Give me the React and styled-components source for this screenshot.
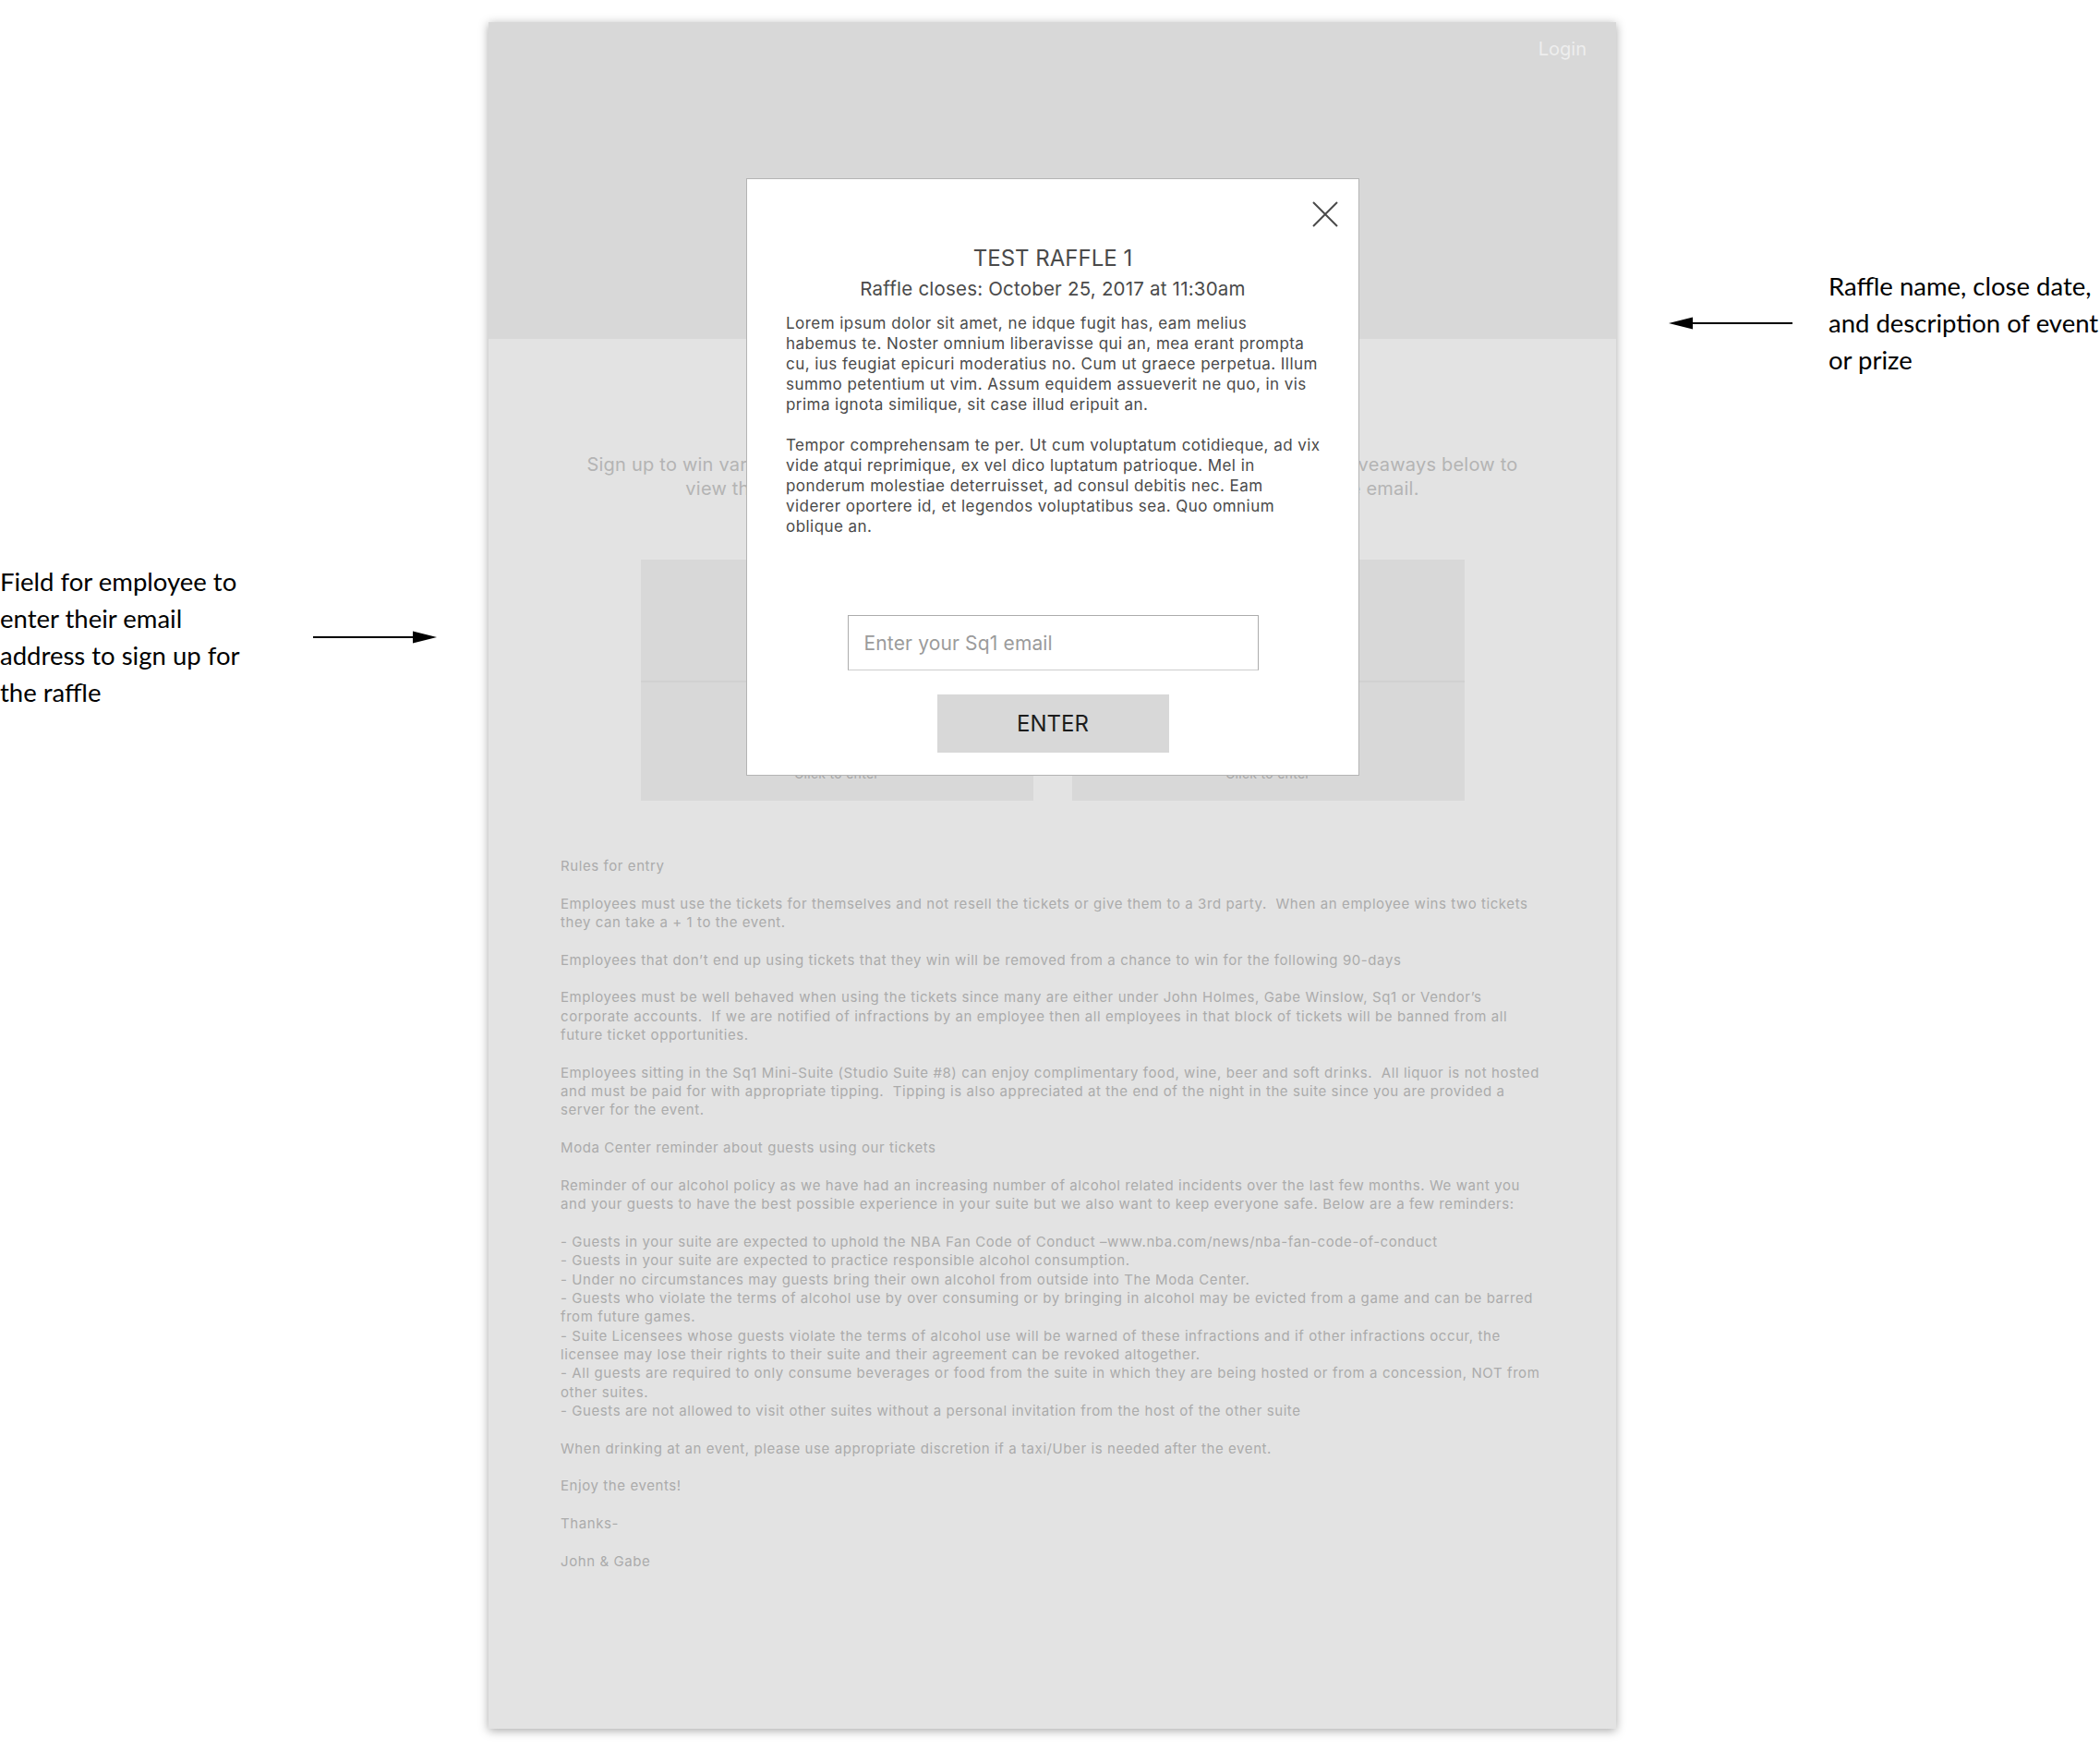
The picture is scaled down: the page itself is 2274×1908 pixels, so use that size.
import React from 'react';
import styled, { createGlobalStyle } from 'styled-components';

const GlobalStyle = createGlobalStyle`
  html, body { margin: 0; padding: 0; background: #ffffff; }
  body { font-family: Inter, "Noto Sans", sans-serif; -webkit-font-smoothing: antialiased; }
  #root { width: 2274px; height: 1908px; overflow: hidden; }
`;

const Canvas = styled.div`
  display: flex;
  align-items: flex-start;
  width: 2274px;
  height: 1908px;
  overflow: hidden;
  background: #ffffff;
`;

const LeftNote = styled.aside`
  flex: none;
  width: 529px;
  padding-top: 610px;
  display: flex;
  align-items: center;
`;

const RightNote = styled.aside`
  flex: none;
  margin-left: 57px;
  padding-top: 290px;
  display: flex;
  align-items: center;
  gap: 39px;
`;

const NoteText = styled.p`
  margin: 0;
  width: ${(p) => p.$width || 'auto'};
  font-family: Lato, "Open Sans", sans-serif;
  font-size: 27.5px;
  line-height: 40px;
  color: #000000;
  white-space: nowrap;
`;

const ArrowSvg = styled.svg`
  flex: none;
  display: block;
`;

const Page = styled.main`
  position: relative;
  flex: none;
  width: 1221px;
  height: 1848px;
  margin-top: 24px;
  background: #e3e3e3;
  box-shadow: 0 2px 10px rgba(0, 0, 0, 0.35);
  display: flex;
  flex-direction: column;
`;

const Header = styled.header`
  height: 343px;
  flex: none;
  background: #d8d8d8;
  display: flex;
  justify-content: flex-end;
  align-items: flex-start;
  padding: 17px 32px 0 0;
  box-sizing: border-box;
`;

const LoginLink = styled.span`
  font-size: 20px;
  line-height: 24px;
  color: #eeeeee;
`;

const Intro = styled.p`
  margin: 123px 0 0;
  text-align: center;
  font-size: 20px;
  line-height: 26px;
  letter-spacing: 0.22px;
  color: #b4b4b4;
  white-space: nowrap;
`;

const CardRow = styled.section`
  margin-top: 64px;
  display: flex;
  justify-content: center;
  gap: 42px;
`;

const Card = styled.div`
  width: 425px;
  height: 261px;
  background: #d8d8d8;
  display: flex;
  flex-direction: column;
`;

const CardImage = styled.div`
  height: 131px;
  flex: none;
`;

const CardFooter = styled.div`
  flex: 1;
  border-top: 2px solid #d1d1d1;
  display: flex;
  align-items: flex-end;
  justify-content: center;
  padding-bottom: 21px;
`;

const CardAction = styled.span`
  font-size: 14px;
  line-height: 17px;
  color: #a6a6a6;
  letter-spacing: 0.3px;
`;

const Rules = styled.section`
  padding: 61px 78px 0;
  color: #ababab;
  font-size: 15px;
  line-height: 20.35px;
  letter-spacing: 0.58px;
`;

const RulesPara = styled.p`
  margin: 0 0 20.35px;
`;

const Line = styled.span`
  display: block;
  white-space: pre;
`;

const Modal = styled.div`
  position: absolute;
  left: 279px;
  top: 169px;
  width: 664px;
  height: 647px;
  box-sizing: border-box;
  background: #ffffff;
  border: 1px solid #b4b4b4;
  padding: 71px 42px 0;
  display: flex;
  flex-direction: column;
  align-items: center;
  color: #4a4a4a;
`;

const CloseButton = styled.button`
  position: absolute;
  top: 24px;
  right: 22px;
  width: 28px;
  height: 28px;
  padding: 0;
  border: 0;
  background: transparent;
  cursor: pointer;
  display: block;
`;

const ModalTitle = styled.h2`
  margin: 0;
  font-size: 24px;
  line-height: 30px;
  font-weight: 400;
  color: #4a4a4a;
`;

const ModalDate = styled.p`
  margin: 6px 0 0;
  font-size: 20.5px;
  line-height: 24px;
  letter-spacing: 0.2px;
  color: #4a4a4a;
`;

const ModalBody = styled.div`
  margin-top: 14px;
  align-self: stretch;
  font-size: 17px;
  line-height: 22px;
  letter-spacing: 0.45px;
  color: #4a4a4a;
`;

const BodyPara = styled.p`
  margin: 0;
  & + & { margin-top: 22px; }
`;

const EmailInput = styled.input`
  margin-top: 85px;
  width: 445px;
  height: 60px;
  box-sizing: border-box;
  border: 1px solid #acacac;
  border-bottom-color: #cdcdcd;
  border-radius: 0;
  padding: 0 17px;
  font-family: Inter, "Noto Sans", sans-serif;
  font-size: 21px;
  letter-spacing: 0.15px;
  color: #4a4a4a;
  outline: none;
  &::placeholder { color: #9b9b9b; }
`;

const EnterButton = styled.button`
  margin-top: 26px;
  width: 251px;
  height: 63px;
  border: 0;
  border-radius: 0;
  background: #d8d8d8;
  font-family: Inter, "Noto Sans", sans-serif;
  font-size: 24px;
  color: #1c1c1c;
  cursor: pointer;
`;

const Arrow = ({ dir }) => (
  <ArrowSvg width="134" height="16" viewBox="0 0 134 16">
    {dir === 'right' ? (
      <>
        <line x1="0" y1="8" x2="112" y2="8" stroke="#000" strokeWidth="2" />
        <polygon points="108,1.5 134,8 108,14.5" fill="#000" />
      </>
    ) : (
      <>
        <line x1="22" y1="8" x2="134" y2="8" stroke="#000" strokeWidth="2" />
        <polygon points="26,1.5 0,8 26,14.5" fill="#000" />
      </>
    )}
  </ArrowSvg>
);

const rules = [
  ['Rules for entry'],
  [
    'Employees must use the tickets for themselves and not resell the tickets or give them to a 3rd party.  When an employee wins two tickets',
    'they can take a + 1 to the event.',
  ],
  ['Employees that don’t end up using tickets that they win will be removed from a chance to win for the following 90-days'],
  [
    'Employees must be well behaved when using the tickets since many are either under John Holmes, Gabe Winslow, Sq1 or Vendor’s',
    'corporate accounts.  If we are notified of infractions by an employee then all employees in that block of tickets will be banned from all',
    'future ticket opportunities.',
  ],
  [
    'Employees sitting in the Sq1 Mini-Suite (Studio Suite #8) can enjoy complimentary food, wine, beer and soft drinks.  All liquor is not hosted',
    'and must be paid for with appropriate tipping.  Tipping is also appreciated at the end of the night in the suite since you are provided a',
    'server for the event.',
  ],
  ['Moda Center reminder about guests using our tickets'],
  [
    'Reminder of our alcohol policy as we have had an increasing number of alcohol related incidents over the last few months. We want you',
    'and your guests to have the best possible experience in your suite but we also want to keep everyone safe. Below are a few reminders:',
  ],
  [
    '- Guests in your suite are expected to uphold the NBA Fan Code of Conduct –www.nba.com/news/nba-fan-code-of-conduct',
    '- Guests in your suite are expected to practice responsible alcohol consumption.',
    '- Under no circumstances may guests bring their own alcohol from outside into The Moda Center.',
    '- Guests who violate the terms of alcohol use by over consuming or by bringing in alcohol may be evicted from a game and can be barred',
    'from future games.',
    '- Suite Licensees whose guests violate the terms of alcohol use will be warned of these infractions and if other infractions occur, the',
    'licensee may lose their rights to their suite and their agreement can be revoked altogether.',
    '- All guests are required to only consume beverages or food from the suite in which they are being hosted or from a concession, NOT from',
    'other suites.',
    '- Guests are not allowed to visit other suites without a personal invitation from the host of the other suite',
  ],
  ['When drinking at an event, please use appropriate discretion if a taxi/Uber is needed after the event.'],
  ['Enjoy the events!'],
  ['Thanks-'],
  ['John & Gabe'],
];

const description = [
  [
    'Lorem ipsum dolor sit amet, ne idque fugit has, eam melius',
    'habemus te. Noster omnium liberavisse qui an, mea erant prompta',
    'cu, ius feugiat epicuri moderatius no. Cum ut graece perpetua. Illum',
    'summo petentium ut vim. Assum equidem assueverit ne quo, in vis',
    'prima ignota similique, sit case illud eripuit an.',
  ],
  [
    'Tempor comprehensam te per. Ut cum voluptatum cotidieque, ad vix',
    'vide atqui reprimique, ex vel dico luptatum patrioque. Mel in',
    'ponderum molestiae deterruisset, ad consul debitis nec. Eam',
    'viderer oportere id, et legendos voluptatibus sea. Quo omnium',
    'oblique an.',
  ],
];

export default function App() {
  return (
    <>
      <GlobalStyle />
      <Canvas>
        <LeftNote>
          <NoteText $width="339px">
            Field for employee to
            <br />
            enter their email
            <br />
            address to sign up for
            <br />
            the raffle
          </NoteText>
          <Arrow dir="right" />
        </LeftNote>

        <Page>
          <Header>
            <LoginLink>Login</LoginLink>
          </Header>
          <Intro>
            Sign up to win various event tickets and fun prizes from Sq1! Click on any one of the giveaways below to
            <br />
            view the details of each raffle and sign up to enter using your Sq1 employee email.
          </Intro>
          <CardRow>
            {[0, 1].map((i) => (
              <Card key={i}>
                <CardImage />
                <CardFooter>
                  <CardAction>Click to enter</CardAction>
                </CardFooter>
              </Card>
            ))}
          </CardRow>
          <Rules>
            {rules.map((para, i) => (
              <RulesPara key={i}>
                {para.map((l, j) => (
                  <Line key={j}>{l}</Line>
                ))}
              </RulesPara>
            ))}
          </Rules>

          <Modal role="dialog" aria-label="TEST RAFFLE 1">
            <CloseButton aria-label="Close">
              <svg width="28" height="28" viewBox="0 0 28 28">
                <path d="M1 1 L27 27 M27 1 L1 27" stroke="#4a4a4a" strokeWidth="2" fill="none" />
              </svg>
            </CloseButton>
            <ModalTitle>TEST RAFFLE 1</ModalTitle>
            <ModalDate>Raffle closes: October 25, 2017 at 11:30am</ModalDate>
            <ModalBody>
              {description.map((para, i) => (
                <BodyPara key={i}>
                  {para.map((l, j) => (
                    <Line key={j}>{l}</Line>
                  ))}
                </BodyPara>
              ))}
            </ModalBody>
            <EmailInput type="email" placeholder="Enter your Sq1 email" />
            <EnterButton>ENTER</EnterButton>
          </Modal>
        </Page>

        <RightNote>
          <Arrow dir="left" />
          <NoteText>
            Raffle name, close date,
            <br />
            and description of event
            <br />
            or prize
          </NoteText>
        </RightNote>
      </Canvas>
    </>
  );
}
